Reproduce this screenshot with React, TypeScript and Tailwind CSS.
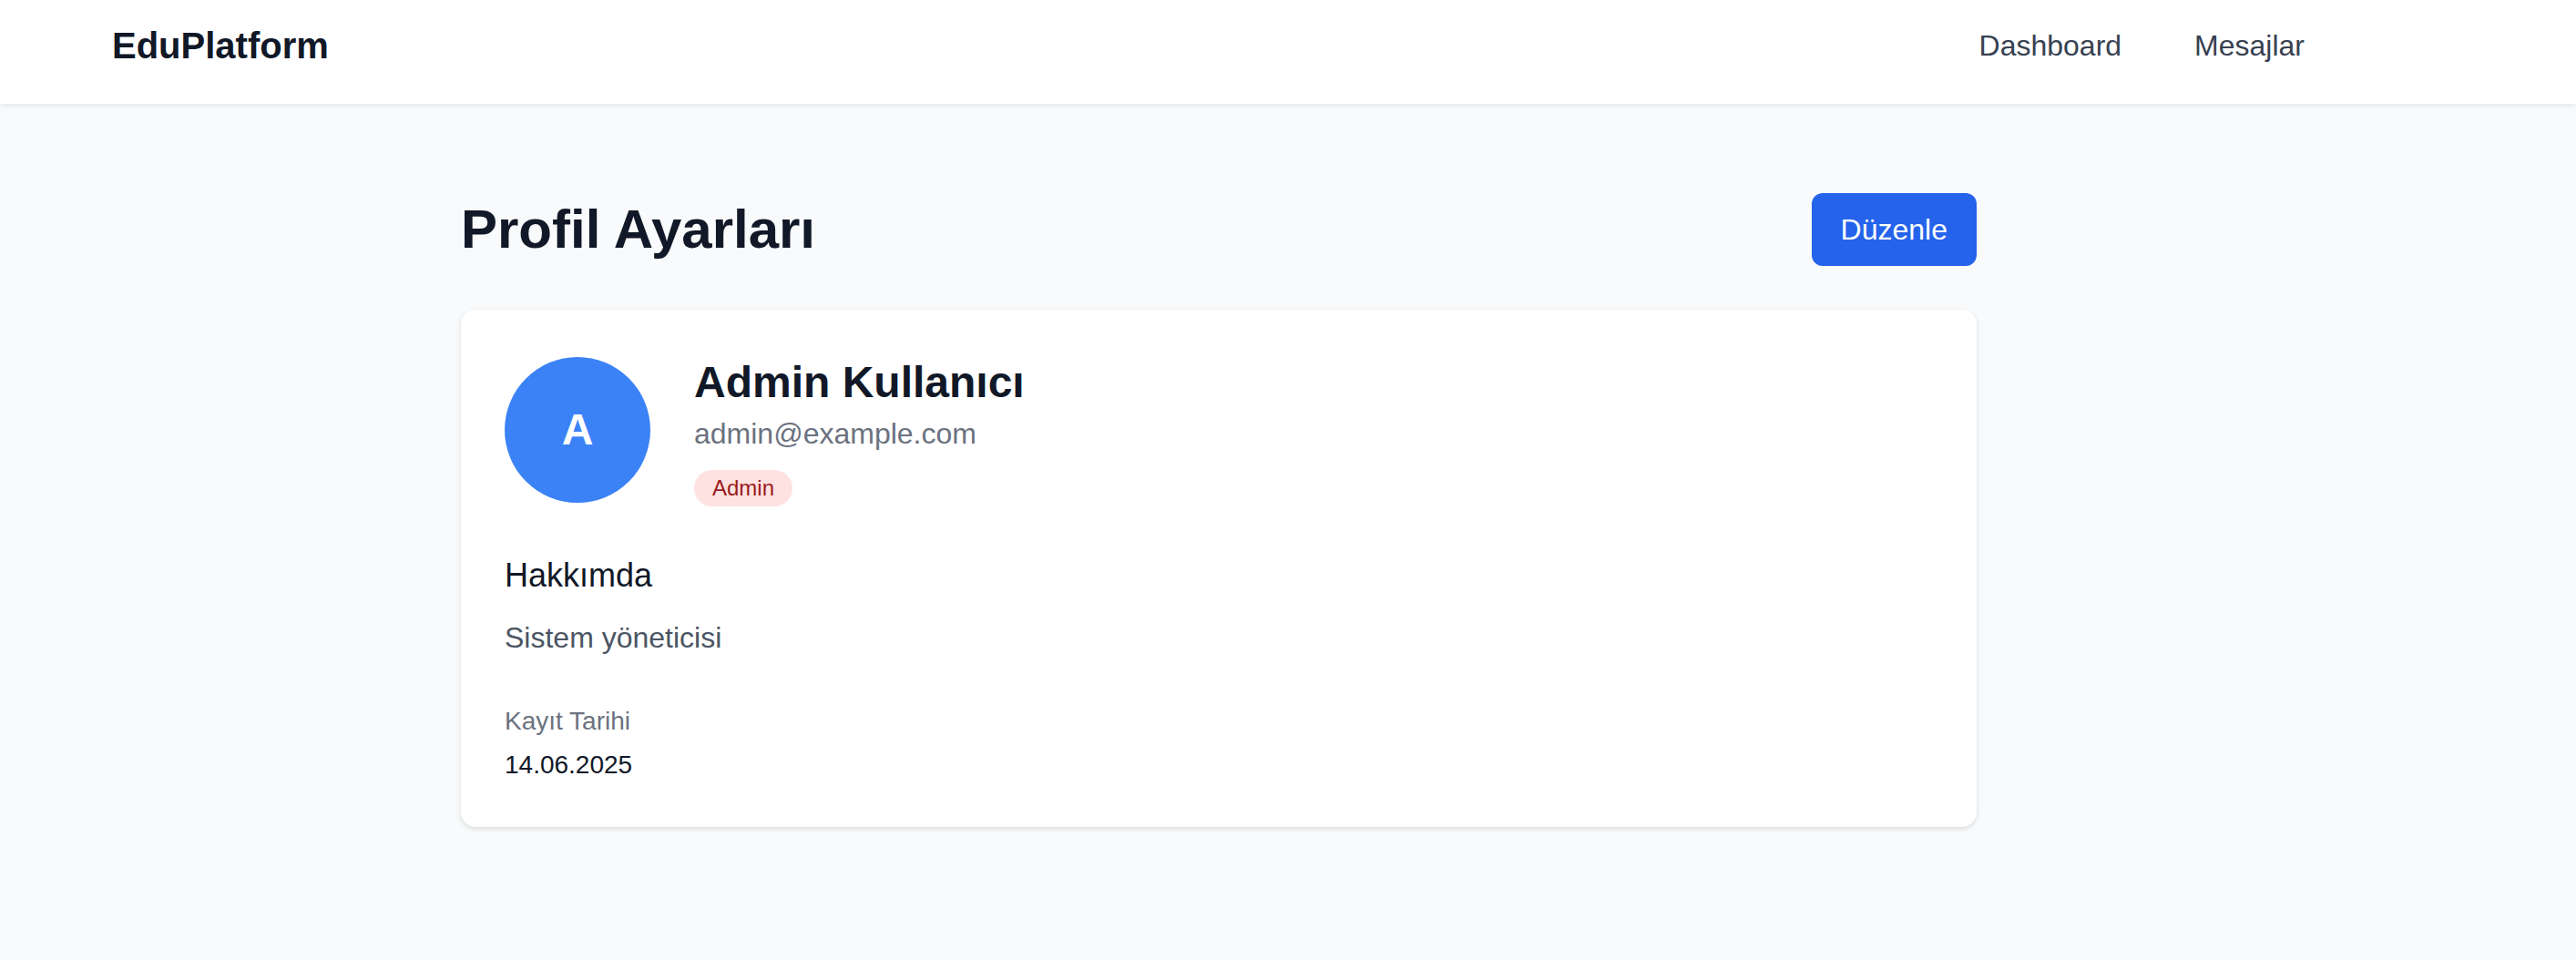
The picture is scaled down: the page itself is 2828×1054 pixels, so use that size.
import { FC } from 'react';

const NavBar: FC = () => {
  return (
    <nav className="h-[114px] bg-white shadow-[0_2px_6px_rgba(0,0,0,0.08)] relative z-10">
      <div className="h-[100px] flex items-center justify-between pl-[123px] pr-[274px]">
        <span className="text-[40px] leading-[56px] font-bold text-[#111827]">EduPlatform</span>
        <div className="flex items-center gap-8">
          <a className="px-6 py-4 text-[32px] leading-[48px] text-[#374151]">Dashboard</a>
          <a className="px-6 py-4 text-[32px] leading-[48px] text-[#374151]">Mesajlar</a>
        </div>
      </div>
    </nav>
  );
};

const ProfileCard: FC = () => {
  return (
    <div className="bg-white rounded-2xl p-12 shadow-[0_2px_6px_rgba(0,0,0,0.1),0_2px_4px_-2px_rgba(0,0,0,0.08)]">
      <div className="flex items-center gap-12">
        <div className="w-[160px] h-[160px] rounded-full bg-[#3b82f6] flex items-center justify-center text-white text-[48px] font-bold">
          A
        </div>
        <div>
          <h2 className="text-[48px] leading-[64px] font-bold text-[#111827]">Admin Kullanıcı</h2>
          <p className="text-[32px] leading-[48px] text-[#6b7280]">admin@example.com</p>
          <span className="inline-block mt-4 px-5 py-1 rounded-full bg-[#fee2e2] text-[#991b1b] text-[24px] leading-[32px]">
            Admin
          </span>
        </div>
      </div>

      <h3 className="mt-12 mb-4 text-[36px] leading-[56px] font-medium text-[#111827]">Hakkımda</h3>
      <p className="text-[32px] leading-[48px] text-[#4b5563]">Sistem yöneticisi</p>

      <div className="mt-12">
        <p className="text-[28px] leading-[40px] text-[#6b7280]">Kayıt Tarihi</p>
        <p className="mt-2 text-[28px] leading-[40px] text-[#111827]">14.06.2025</p>
      </div>
    </div>
  );
};

const App: FC = () => {
  return (
    <div className="min-h-[1054px] bg-[#f9fafb]" style={{ fontFamily: '"Liberation Sans", Arial, sans-serif' }}>
      <NavBar />
      <main className="pt-[98px] pl-[506px]">
        <div className="w-[1664px]">
          <div className="flex items-center justify-between mb-12">
            <h1 className="text-[60px] leading-[72px] font-bold text-[#111827]">Profil Ayarları</h1>
            <button className="bg-[#2563eb] text-white rounded-xl px-8 py-4 text-[32px] leading-[48px]">
              Düzenle
            </button>
          </div>
          <ProfileCard />
        </div>
      </main>
    </div>
  );
};

export default App;
